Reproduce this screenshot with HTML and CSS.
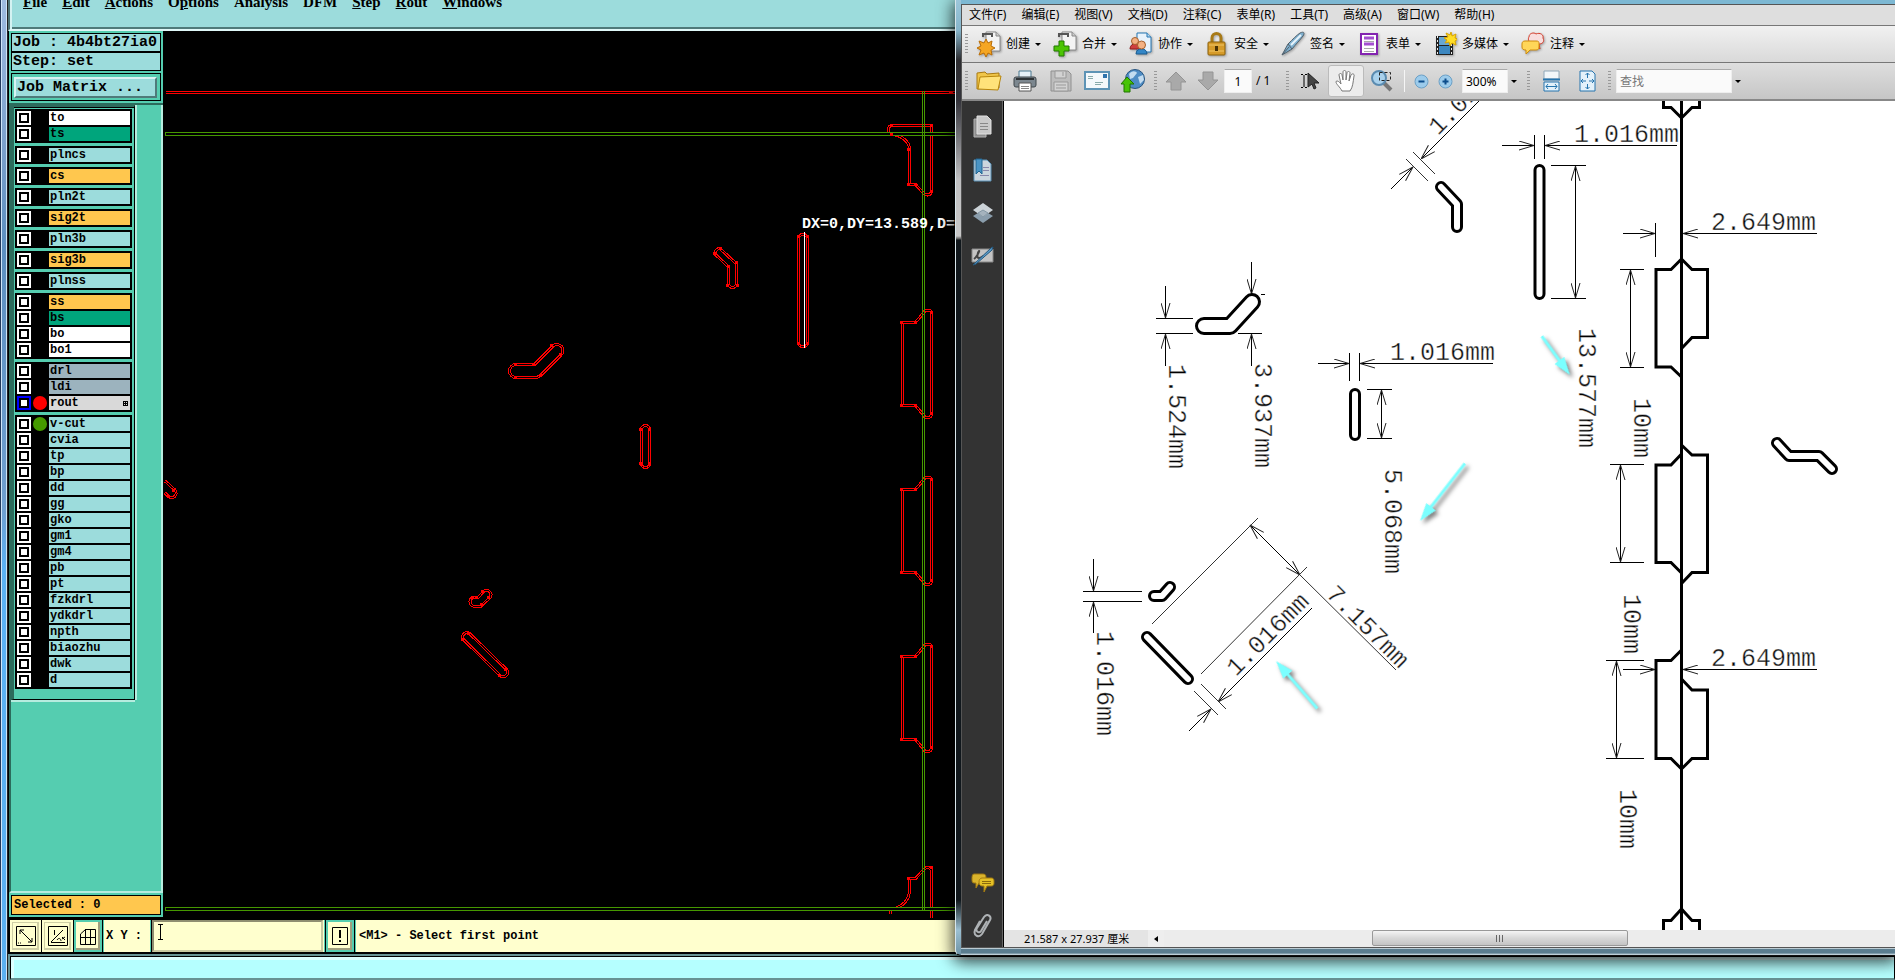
FILE: index.html
```html
<!DOCTYPE html>
<html lang="zh-CN">
<head>
<meta charset="utf-8">
<title>Rout check</title>
<link rel="stylesheet" href="styles.css">
</head>
<body>
<div class="cad">
  <div class="cad-edge"></div>
  <div class="cad-body">
    <nav class="cad-menu">
      <button><u>F</u>ile</button><button><u>E</u>dit</button><button><u>A</u>ctions</button><button>O<u>p</u>tions</button><button>Analysis</button><button>DFM</button><button><u>S</u>tep</button><button><u>R</u>out</button><button><u>W</u>indows</button>
    </nav>
    <div class="cad-main">
      <aside class="panel">
        <div class="panel-head">
          <div class="info">Job : 4b4bt27ia0</div>
          <div class="info">Step: set</div>
          <div class="matrix"><button>Job Matrix ...</button></div>
        </div>
        <div class="panel-mid">
          <div class="layers">
            <div class="group">
              <label class="row"><input type="checkbox"><i></i><span class="white">to</span></label>
              <label class="row"><input type="checkbox"><i></i><span class="green">ts</span></label>
            </div>
            <div class="group"><label class="row"><input type="checkbox"><i></i><span>plncs</span></label></div>
            <div class="group"><label class="row"><input type="checkbox"><i></i><span class="amber">cs</span></label></div>
            <div class="group"><label class="row"><input type="checkbox"><i></i><span>pln2t</span></label></div>
            <div class="group"><label class="row"><input type="checkbox"><i></i><span class="amber">sig2t</span></label></div>
            <div class="group"><label class="row"><input type="checkbox"><i></i><span>pln3b</span></label></div>
            <div class="group"><label class="row"><input type="checkbox"><i></i><span class="amber">sig3b</span></label></div>
            <div class="group"><label class="row"><input type="checkbox"><i></i><span>plnss</span></label></div>
            <div class="group">
              <label class="row"><input type="checkbox"><i></i><span class="amber">ss</span></label>
              <label class="row"><input type="checkbox"><i></i><span class="green">bs</span></label>
              <label class="row"><input type="checkbox"><i></i><span class="white">bo</span></label>
              <label class="row"><input type="checkbox"><i></i><span class="white">bo1</span></label>
            </div>
            <div class="group">
              <label class="row"><input type="checkbox"><i></i><span class="slate">drl</span></label>
              <label class="row"><input type="checkbox"><i></i><span class="slate">ldi</span></label>
              <label class="row work"><input type="checkbox"><i class="dot-red"></i><span class="silver">rout<svg width="5" height="5"><path d="M0 .5h5M0 2.5h5M0 4.5h5M.5 0v5M2.5 0v5M4.5 0v5" stroke="#000"/></svg></span></label>
            </div>
            <div class="group">
              <label class="row"><input type="checkbox"><i class="dot-green"></i><span>v-cut</span></label>
              <label class="row"><input type="checkbox"><i></i><span>cvia</span></label>
              <label class="row"><input type="checkbox"><i></i><span>tp</span></label>
              <label class="row"><input type="checkbox"><i></i><span>bp</span></label>
              <label class="row"><input type="checkbox"><i></i><span>dd</span></label>
              <label class="row"><input type="checkbox"><i></i><span>gg</span></label>
              <label class="row"><input type="checkbox"><i></i><span>gko</span></label>
              <label class="row"><input type="checkbox"><i></i><span>gm1</span></label>
              <label class="row"><input type="checkbox"><i></i><span>gm4</span></label>
              <label class="row"><input type="checkbox"><i></i><span>pb</span></label>
              <label class="row"><input type="checkbox"><i></i><span>pt</span></label>
              <label class="row"><input type="checkbox"><i></i><span>fzkdrl</span></label>
              <label class="row"><input type="checkbox"><i></i><span>ydkdrl</span></label>
              <label class="row"><input type="checkbox"><i></i><span>npth</span></label>
              <label class="row"><input type="checkbox"><i></i><span>biaozhu</span></label>
              <label class="row"><input type="checkbox"><i></i><span>dwk</span></label>
              <label class="row"><input type="checkbox"><i></i><span>d</span></label>
            </div>
          </div>
        </div>
        <div class="selected"><div>Selected : 0</div></div>
      </aside>
      <div class="board">
        <svg width="100%" height="100%" aria-label="Board view">
          <defs>
            <g id="rout">
              <path d="M960 92.5H165.500"/>
              <path d="M891 134.500a5 5 0 0 1 0-9H931.500V192a4.500 4.500 0 0 1-8 1L915.500 184.500H909.500V149C909.500 142 902 135 891 134.500Z"/>
              <path id="tab" d="M902.500 322.500H915.500L923 313.500C925 309 931 309 931.500 313V413.500C931 419 925 419 923 414.500L915.500 405.500H902.500Z"/>
              <use href="#tab" y="167"/><use href="#tab" y="334"/>
              <path d="M891 910a5 5 0 0 0 0 4M931.500 930V870a4.500 4.500 0 0 0-8 0L915.500 878.500H909.500V890C909.500 900 902 908 891 909"/>
              <rect x="798.500" y="234.500" width="9" height="112" rx="4"/>
              <path d="M720 248.500L736.500 264V285A4.500 4.500 0 0 1 728.500 285V267L715 254A5 5 0 0 1 720 248.500Z"/>
              <path d="M516 364.500H534.500L553 346A6 6 0 0 1 561 355L541 375L537 377.500H516A6.500 6.500 0 0 1 516 364.500Z"/>
              <rect x="641.500" y="425.500" width="8" height="42" rx="4"/>
              <path d="M473 597.500H478L484 591A4.500 4.500 0 0 1 490 597.500L481 606H473A4.500 4.500 0 0 1 473 597.500Z"/>
              <path d="M469 633L507 670A4.500 4.500 0 0 1 500 675.500L463 639A4.500 4.500 0 0 1 469 633Z"/>
              <path d="M165 481L175 490A4 4 0 0 1 168 496L165 493"/>
            </g>
            <path id="vcut" d="M960 134H165M960 909H165"/>
          </defs>
          <g class="cam" transform="translate(-163 -31)" fill="none">
            <use href="#rout" stroke="#f00" stroke-width="3"/>
            <use href="#rout" stroke="#000" stroke-width="1"/>
            <use href="#vcut" stroke="#459800" stroke-width="4"/>
            <use href="#vcut" stroke="#000" stroke-width="2"/>
            <path d="M922.500 91V911M924.500 91V911M165.500 132V136M165.500 907V911" stroke="#459800"/>
            <path d="M890 125h3M930 125h3M890 134h3M907 149h3M907 184h3M914 184h3M930 191h3M900 322h3M914 322h3M930 312h3M900 405h3M914 405h3M930 413h3M900 489h3M914 489h3M930 479h3M900 572h3M914 572h3M930 580h3M900 656h3M914 656h3M930 646h3M900 739h3M914 739h3M930 747h3M907 878h3M930 867h3M797 236h3M806 236h3M797 343h3M806 343h3M713 253h3M719 248h3M727 266h3M735 262h3M726 285h3M736 285h3M514 364h3M532 364h3M550 345h3M559 354h3M539 375h3M514 377h3M639 429h3M648 429h3M639 463h3M648 463h3M471 597h3M475 597h3M481 591h3M487 597h3M480 604h3M467 633h3M504 669h3M461 639h3M498 675h3M172 490h3M167 496h3M949 92h4" stroke="#f00" stroke-width="3"/>
            <path d="M804.500 232V348" stroke="#fff"/>
            <text class="measure" x="802" y="228">DX=0,DY=13.589,D=</text>
          </g>
        </svg>
      </div>
    </div>
    <div class="console">
      <button class="tool" aria-label="Zoom"><svg width="20" height="20" fill="none" stroke="#000"><path d="M.5.5h19v19H.5zM4 4l12 12M4 8V4h4M16 12v4h-4"/><path d="M2 17h3" stroke-dasharray="1 1"/></svg></button>
      <button class="tool" aria-label="Angle"><svg width="20" height="20" fill="none" stroke="#000"><path d="M.5.5h19v19H.5zM3 16.500h14M3 16L15 4M6.500 4v5M9 14c2-3 4-1 4 1M14 13l3-2M17 14l-3-3"/></svg></button>
      <button class="tool framed" aria-label="Grid"><svg width="16" height="20" fill="none" stroke="#000"><path d="M.5 8V18.500h15V3.500H5.500L.5 8M5.500 3v15M10.500 3v15M0 11.500h15"/></svg></button>
      <label class="xy" for="xy">X Y :</label>
      <div class="entry"><input id="xy" type="text"><svg class="caret" width="5" height="16" fill="none" stroke="#000"><path d="M0 .5h5M2.500 0v16M0 15.500h5"/></svg></div>
      <button class="tool framed" aria-label="Alert"><svg width="16" height="18" fill="none" stroke="#000"><path d="M.5.5h15v17H.5z"/><path d="M8 3v8M8 13v2" stroke-width="2"/></svg></button>
      <output class="message">&lt;M1&gt; - Select first point</output>
    </div>
    <footer class="cad-foot"><div></div></footer>
  </div>
</div>

<div class="pdf">
  <div class="pdf-body">
    <nav class="pdf-menu"><button>文件(F)</button><button>编辑(E)</button><button>视图(V)</button><button>文档(D)</button><button>注释(C)</button><button>表单(R)</button><button>工具(T)</button><button>高级(A)</button><button>窗口(W)</button><button>帮助(H)</button></nav>
    <div class="tasks">
      <span class="grip"></span>
      <button><svg width="24" height="26" viewBox="0 0 24 26"><path d="M9 1h10l4 4v15H9z" fill="#f3f3f3" stroke="#888"/><path d="M19 1v4h4" fill="#ccc" stroke="#888"/><path d="M6 6V3h9v3" fill="none" stroke="#555" stroke-width="2"/><path d="M9 8l2 4 4-2-1 5 4 2-4 2 1 5-4-2-2 4-2-4-5 2 2-5-4-2 4-2-2-5 5 2z" fill="#f5a623" stroke="#b96d07"/></svg>创建<b></b></button>
      <button><svg width="24" height="26" viewBox="0 0 24 26"><path d="M9 1h10l4 4v14H9z" fill="#f3f3f3" stroke="#888"/><path d="M19 1v4h4" fill="#ccc" stroke="#888"/><path d="M6 6V3h9v3" fill="none" stroke="#555" stroke-width="2"/><path d="M6 10h5v5h5v5h-5v5H6v-5H1v-5h5z" fill="#4cc404" stroke="#237a00"/></svg>合并<b></b></button>
      <button><svg width="24" height="26" viewBox="0 0 24 26"><path d="M8 2h10l4 4v15H8z" fill="#e8f2fb" stroke="#2477b3"/><path d="M18 2v4h4" fill="#b5d6ef" stroke="#2477b3"/><path d="M1 18c0-7 10-7 10 0z" fill="#cf3f3f" stroke="#8f1f1f"/><circle cx="6" cy="10" r="3.500" fill="#f4b183" stroke="#a5602c"/><path d="M7 23c0-7 11-7 11 0z" fill="#3487c7" stroke="#195a8e"/><circle cx="12.500" cy="14" r="4" fill="#f4b183" stroke="#a5602c"/></svg>协作<b></b></button>
      <button><svg width="24" height="26" viewBox="0 0 24 26"><path d="M7 12V7c0-6 9-6 9 0v5" fill="none" stroke="#a87a17" stroke-width="3"/><rect x="3" y="11" width="17" height="13" rx="1" fill="#d69b2a" stroke="#8b600b"/><path d="M4 14h15M4 20h15" stroke="#efc566"/><path d="M11.500 15v5" stroke="#4a3204" stroke-width="3"/></svg>安全<b></b></button>
      <button><svg width="24" height="26" viewBox="0 0 24 26"><path d="M1 24L7 13C12 8 16 4 19 2c4-2 5 0 3 3-3 4-7 8-11 13z" fill="#7fb0cf" stroke="#50606c"/><path d="M10 14L20 4" fill="none" stroke="#e8f4fb" stroke-width="2"/><path d="M1 24l7-8M7 13l4 5" fill="none" stroke="#50606c"/></svg>签名<b></b></button>
      <button><svg width="24" height="26" viewBox="0 0 24 26"><rect x="4" y="3" width="16" height="20" fill="#fff" stroke="#8324b0" stroke-width="2"/><path d="M7 7h10M7 13h10" stroke="#a44fd0" stroke-width="3"/><path d="M7 10.500h10M7 17.500h10M7 20.500h10" stroke="#aaa"/></svg>表单<b></b></button>
      <button><svg width="24" height="26" viewBox="0 0 24 26"><rect x="3" y="5" width="17" height="19" fill="#222"/><rect x="6" y="6" width="11" height="8" fill="#68a7d4"/><rect x="6" y="15" width="11" height="8" fill="#3c87c0"/><path d="M4.500 5v19M18.500 5v19" stroke="#eee" stroke-dasharray="2 2"/><path d="M18 1l1 4 4-2-1 4 3 1-3 2 1 4-4-2-2 3-1-4-4 1 2-3-3-2 4-1-2-4 4 2z" fill="#ffdd26" stroke="#d9a400"/></svg>多媒体<b></b></button>
      <button><svg width="24" height="26" viewBox="0 0 24 26"><path d="M8 6c0-4 5-5 7-3 4-2 8 1 7 4 2 4-1 6-4 6l1 5-4-5c-4 1-5 0-5-2-3 0-3-4-2-5z" fill="#f8dede" stroke="#d33c2a"/><path d="M4 10h11c3 0 3 1 3 3v3c0 2-1 3-3 3H9l-4 4v-4c-3 0-4-1-4-3v-3c0-2 1-3 3-3z" fill="#ffd658" stroke="#d08c0c"/></svg>注释<b></b></button>
    </div>
    <div class="tools">
      <span class="grip"></span>
      <div class="set">
        <button aria-label="打开"><svg width="26" height="22" viewBox="0 0 26 22"><path d="M1 19V3l8-1 2 2 12-1v15z" fill="#f0c64a" stroke="#a87911"/><path d="M4 7l21-1-3 14-20-1z" fill="#ffe27a" stroke="#b8860b"/></svg></button>
        <button aria-label="打印"><svg width="24" height="24" viewBox="0 0 24 24"><path d="M6 9V2h12v7" fill="#e6f0f7" stroke="#4a7890"/><rect x="1" y="8" width="22" height="10" rx="2" fill="#7c878f" stroke="#3f464b"/><path d="M3 10h18" stroke="#2e3336" stroke-width="2"/><path d="M6 14h12v8H6z" fill="#fff" stroke="#555"/><path d="M8 17.500h8M8 19.500h8" stroke="#888"/></svg></button>
        <button aria-label="保存"><svg width="22" height="22" viewBox="0 0 22 22"><path d="M1 1h17l3 3v17H1z" fill="#bdbdbd" stroke="#909090"/><path d="M5 1h11v7H5zM4 12h14v9H4z" fill="#d2d2d2" stroke="#999"/><path d="M13 2v4M6 15h10M6 18h10" stroke="#999"/></svg></button>
        <button aria-label="邮件"><svg width="26" height="20" viewBox="0 0 26 20"><rect x="1" y="1" width="24" height="17" fill="#f4f8fb" stroke="#5d93b5" stroke-width="2"/><rect x="19" y="3" width="4" height="4" fill="#2f74ad"/><path d="M4 5.500h5M4 7.500h5M11 11.500h8M11 13.500h6" stroke="#8aa"/></svg></button>
        <button aria-label="上载"><svg width="26" height="24" viewBox="0 0 26 24"><circle cx="15" cy="10" r="9.500" fill="#4e8cc4" stroke="#27547f"/><path d="M9 5c3-4 7-3 8-1l-4 5-3 1zM18 8l5-2 1 5-4 4z" fill="#c3dcf0"/><path d="M7 8l7 7h-4v8H4v-8H1z" fill="#48c405" stroke="#217400"/></svg></button>
      </div>
      <span class="grip"></span>
      <div class="set narrow">
        <button aria-label="上一页"><svg width="22" height="20" viewBox="0 0 22 20"><path d="M11 1l10 10h-5v8H6v-8H1z" fill="#a9a9a9" stroke="#949494"/></svg></button>
        <button aria-label="下一页"><svg width="22" height="20" viewBox="0 0 22 20"><path d="M11 19L1 9h5V1h10v8h5z" fill="#a9a9a9" stroke="#949494"/></svg></button>
      </div>
      <input class="page" type="text" value="1" aria-label="页码"><span class="total">/ 1</span>
      <span class="grip"></span>
      <div class="set">
        <button aria-label="选择"><svg width="20" height="18" viewBox="0 0 20 18"><path d="M1 2.500h2M5 2.500h2M4 3v12M1 15.500h2M5 15.500h2" stroke="#000" stroke-width="1"/><path d="M8 1v14l4-3 2 5 2-1-2-5h5z" fill="#444" stroke="#222"/></svg></button>
        <button class="active" aria-label="手形"><svg width="22" height="22" viewBox="0 0 22 22"><path d="M7 21C5 17 1 14 1 12s3-1 5 2L4 5c0-2 3-2 3 0l1 5V2c0-2 3-2 3 0v8l1-7c0-2 3-2 3 0l-1 8 2-6c1-2 4-1 3 1-1 6-1 11-4 15z" fill="#fff" stroke="#777"/></svg></button>
        <button aria-label="缩放"><svg width="22" height="22" viewBox="0 0 22 22"><path d="M13 13l7 7" stroke="#777" stroke-width="4"/><circle cx="8" cy="8" r="7" fill="#a9d1ec" stroke="#5a8bb0" stroke-width="2"/><path d="M8.500 2.500h11v8h-11z" fill="none" stroke="#222" stroke-dasharray="3 2"/></svg></button>
      </div>
      <span class="rule"></span>
      <div class="set small">
        <button aria-label="缩小"><svg width="15" height="15" viewBox="0 0 15 15"><circle cx="7.500" cy="7.500" r="6.500" fill="#9ccbeb" stroke="#6ba0c6"/><path d="M4.500 7.500h6" stroke="#0c4d8c" stroke-width="2"/></svg></button>
        <button aria-label="放大"><svg width="15" height="15" viewBox="0 0 15 15"><circle cx="7.500" cy="7.500" r="6.500" fill="#9ccbeb" stroke="#6ba0c6"/><path d="M4.500 7.500h6M7.500 4.500v6" stroke="#0c4d8c" stroke-width="2"/></svg></button>
      </div>
      <input class="zoom" type="text" value="300%" aria-label="缩放比例"><b></b>
      <span class="grip"></span>
      <div class="set">
        <button aria-label="适合宽度"><svg width="17" height="22" viewBox="0 0 17 22"><path d="M1 1h15v8H1z" fill="#f2f7fa" stroke="#90a8b8"/><path d="M0 9.500h17" stroke="#2675ae" stroke-width="2"/><path d="M1 12h15v9H1z" fill="#e3f1fa" stroke="#2675ae"/><path d="M3 16.500h11M5 14l-2 2.500 2 2.500M12 14l2 2.500-2 2.500" fill="none" stroke="#2675ae"/></svg></button>
        <button aria-label="适合页面"><svg width="17" height="22" viewBox="0 0 17 22"><path d="M1 1h12l3 3v17H1z" fill="#e3f1fa" stroke="#2675ae"/><path d="M8.500 3v5M8.500 14v5M2 11h5M10 11h5M6.500 5l2-2 2 2M6.500 17l2 2 2-2M4 9l-2 2 2 2M13 9l2 2-2 2" fill="none" stroke="#2675ae"/></svg></button>
      </div>
      <span class="grip"></span>
      <input class="find" type="text" placeholder="查找" aria-label="查找"><b></b>
    </div>
    <div class="view">
      <div class="side">
        <button aria-label="页面"><svg width="20" height="24" viewBox="0 0 20 24"><path d="M1 4h12v18H1z" fill="#8d8d8d" stroke="#b5b5b5"/><path d="M4 1h10l4 4v14H4z" fill="#c9c9c9" stroke="#e2e2e2"/><path d="M7 8.500h8M7 11.500h8M7 14.500h8" stroke="#888"/></svg></button>
        <button aria-label="书签"><svg width="20" height="24" viewBox="0 0 20 24"><path d="M1 2h13l4 4v17H1z" fill="#ccd6de" stroke="#5c93b8"/><path d="M3 1h6v15l-3-3-3 3z" fill="#4a94c4" stroke="#206591"/><path d="M10 9.500h6M10 12.500h6M7 17.500h9" stroke="#88a"/></svg></button>
        <button aria-label="图层"><svg width="22" height="22" viewBox="0 0 22 22"><path d="M11 8l10 6-10 7-10-7z" fill="#8a9dac"/><path d="M11 1l10 7-10 7L1 8z" fill="#ccd3d8"/><path d="M11 8l5 3-5 4-5-4z" fill="#a5b3be" stroke="#8497a5"/></svg></button>
        <button aria-label="签名"><svg width="24" height="22" viewBox="0 0 24 22"><path d="M1 4h21v13H1z" fill="#c4c4c4" stroke="#888"/><path d="M3 14c3-2 6-9 5-8s-3 7 0 7 3-2 5-2" fill="none" stroke="#444" stroke-width="2"/><path d="M2 20L20 3l2-1-1 3L5 19z" fill="#5c9cc9" stroke="#26587d"/></svg></button>
        <span class="fill"></span>
        <button aria-label="注释"><svg width="24" height="20" viewBox="0 0 24 20"><path d="M3 1h9c3 0 3 2 3 5s0 4-3 4H8l-3 5V10H3C1 10 1 8 1 6s0-5 2-5z" fill="#d9b32c" stroke="#a37b10"/><path d="M11 5h9c3 0 3 2 3 4s0 4-3 4h-4l-3 6v-6h-2c-2 0-3-2-3-4s1-4 3-4z" fill="#e5c126" stroke="#a37b10"/><path d="M11 8.500h9M11 10.500h9" stroke="#8b6a0c"/></svg></button>
        <button aria-label="附件"><svg width="20" height="24" viewBox="0 0 20 24"><path d="M14 7l-6 10c-2 3-6 0-4-3l7-11c3-4 8-1 6 3L9 20c-3 4-9 2-7-4l5-9" fill="none" stroke="#aeb2b5" stroke-width="2"/></svg></button>
      </div>
      <div class="doc">
        <svg width="100%" height="100%" aria-label="Dimension drawing">
          <defs>
            <marker id="tip" viewBox="-15 -5 15 10" refX="0" refY="0" markerWidth="15" markerHeight="10" markerUnits="userSpaceOnUse" orient="auto-start-reverse"><path d="M-15-4.500L0 0l-15 4.500" fill="none" stroke="#222"/></marker>
            <g id="slots">
              <path d="M1441 187L1457 204V227"/><path d="M1154 596H1162L1170 587"/><path d="M1147 637L1188 679"/><path d="M1777 443L1789 456H1819L1832 469"/><path d="M1539.500 170V294M1355 394V435"/>
            </g>
          </defs>
          <g transform="translate(-1004 -101)">
            <g class="dims">
              <text x="1574" y="142">1.016mm</text><text x="1711" y="230">2.649mm</text><text x="1390" y="360">1.016mm</text><text x="1711" y="666">2.649mm</text>
              <text transform="translate(1169 364) rotate(90)">1.524mm</text>
              <text transform="translate(1255 363) rotate(90)">3.937mm</text>
              <text transform="translate(1579 328) rotate(90)">13.577mm</text>
              <text transform="translate(1634 398) rotate(90)">10mm</text>
              <text transform="translate(1385 469) rotate(90)">5.068mm</text>
              <text transform="translate(1097 631) rotate(90)">1.016mm</text>
              <text transform="translate(1624 594) rotate(90)">10mm</text>
              <text transform="translate(1620 789) rotate(90)">10mm</text>
              <text transform="translate(1236 677) rotate(-45)">1.016mm</text>
              <text transform="translate(1325 595) rotate(45)">7.157mm</text>
              <text transform="translate(1438 136) rotate(-45)">1.016mm</text>
            </g>
            <g fill="none" stroke="#000">
              <path d="M1156 318.500H1193M1156 333.500H1193M1261 294.500H1265M1238 333.500H1262M1349.500 353V381M1359.500 353V381M1367 389.500H1392M1367 438.500H1392M1534.500 135V159M1544.500 135V159M1551 165.500H1586M1551 298.500H1586M1655.500 223V257M1620 269.500H1644M1620 367.500H1644M1610 464.500H1644M1610 562.500H1644M1606 660.500H1644M1606 758.500H1644M1083 591.500H1142M1083 601.500H1142"/>
              <path d="M1152 624L1258 518M1201 674L1307 567M1201 684L1226 709M1194 691L1218 715M1300 575L1396 670M1413 152L1435 174M1406 159L1428 181" stroke="#333"/>
              <g marker-end="url(#tip)">
                <path d="M1165.500 286V318"/><path d="M1165.500 366V334"/><path d="M1251.500 262V294"/><path d="M1251.500 366V334"/><path d="M1318 363.500H1349"/><path d="M1493 363.500H1360"/><path d="M1502 145.500H1534"/><path d="M1677 145.500H1545"/><path d="M1623 233.500H1655"/><path d="M1817 233.500H1683"/><path d="M1623 669.500H1655"/><path d="M1817 669.500H1683"/><path d="M1093.500 559V591"/><path d="M1093.500 633V602"/>
                <path d="M1312 608L1218 702"/><path d="M1189 731L1211 709"/><path d="M1490 90L1421 159"/><path d="M1391 189L1413 167"/>
                <g marker-start="url(#tip)"><path d="M1381.500 390V438"/><path d="M1575.500 166V298"/><path d="M1630.500 270V367"/><path d="M1620.500 465V562"/><path d="M1616.500 661V758"/><path d="M1250 525L1300 575"/></g>
              </g>
              <g stroke-width="3">
                <path d="M1681.500 101V931"/>
                <path d="M1663.500 100V107.500H1671L1681.500 118L1692 107.500H1699.500V100M1681.500 259L1671 269.500H1656V367H1671L1681.500 377M1681.500 259L1692 269.500H1707.500V337.500H1692L1682 348M1681.500 454L1671 465H1656V562.500H1671L1681.500 573M1681.500 445L1692 455H1707.500V572.500H1692L1682 583M1681.500 650L1671 660.500H1656V758.500H1671L1681.500 769L1692 758.500H1707.500V690H1692L1681.500 679M1663.500 932V920.500H1671L1681.500 909L1692 920.500H1699.500V932"/>
              </g>
              <g stroke-linecap="round" stroke-linejoin="round">
                <use href="#slots" stroke-width="12"/><use href="#slots" stroke="#fff" stroke-width="6"/>
                <path d="M1204 326H1230L1252 302" stroke-width="18"/><path d="M1204 326H1230L1252 302" stroke="#fff" stroke-width="12"/>
              </g>
            </g>
            <g class="callouts">
              <path transform="translate(1570 375) rotate(54)" d="M0 0L-18-6V-1.500H-48V1.500H-18V6Z"/>
              <path transform="translate(1420 521) rotate(128)" d="M0 0L-18-6V-1.500H-73V1.500H-18V6Z"/>
              <path transform="translate(1276 661) rotate(229)" d="M0 0L-18-6V-1.500H-63V1.500H-18V6Z"/>
            </g>
          </g>
        </svg>
        <div class="status">
          <span class="size">21.587 x 27.937 厘米</span>
          <button class="left" aria-label="向左滚动"><svg width="4" height="6"><path d="M4 0v6L0 3z"/></svg></button>
          <div class="track"><div class="thumb"><svg width="8" height="7"><path d="M.5 0v7M3.500 0v7M6.500 0v7" stroke="#666"/></svg></div></div>
        </div>
      </div>
    </div>
  </div>
</div>
</body>
</html>
```
FILE: styles.css
```css
* { box-sizing: border-box; }
body { margin: 0; height: 100vh; overflow: hidden; position: relative; background: #000; font-family: "Noto Sans", "Noto Sans CJK SC", sans-serif; }
button { font: inherit; color: inherit; background: none; border: 0; padding: 0; margin: 0; }
input { margin: 0; font: inherit; }
svg { display: block; }

/* CAD window */
.cad { display: flex; height: 100%; font-family: "Liberation Mono", monospace; }
.cad-edge { width: 8px; flex: none; background: linear-gradient(#9fbbe0, #7ba0cc 15%, #5c8fc0 25%, #6f9fd0 52%, #5bb2f5 58%, #5bb0f0); border-left: 1px solid #23395c; border-right: 1px solid #222; box-shadow: inset 1px 0 #cfe4f7, inset -1px 0 #cfe4f7; }
.cad-body { flex: 1; min-width: 0; display: flex; flex-direction: column; }
.cad-menu { height: 31px; flex: none; background: #9cdcdc; border-left: 2px solid #4f7375; border-bottom: 2px solid #dff7f7; box-shadow: inset 2px 0 #d4f2f2, inset 0 -2px #4f7a7a; display: flex; align-items: flex-start; gap: 15px; padding-left: 13px; font: bold 15px/20px "Liberation Serif", serif; }
.cad-menu button { margin-top: -8px; }
.cad-main { flex: 1; min-height: 0; display: flex; }
.panel { width: 155px; flex: none; background: #55cdb0; border-left: 1px solid #000; display: flex; flex-direction: column; }
.panel-head { padding: 2px 2px; border-bottom: 2px solid #2c6b5c; }
.info { height: 19px; background: #9cdcdc; border: 1px solid #000; padding-left: 1px; font-size: 15px; line-height: 18px; font-weight: bold; white-space: pre; }
.matrix { margin-top: 2px; height: 28px; border: 1px solid #000; padding: 3px 3px 2px 2px; }
.matrix button { width: 100%; height: 21px; background: #9cdcdc; border: 2px solid; border-color: #d9f3f3 #4f7a7a #4f7a7a #d9f3f3; font-size: 15px; line-height: 17px; font-weight: bold; text-align: left; padding-left: 1px; }
.panel-mid { flex: 1; min-height: 0; border-left: 2px solid #2c6b5c; border-right: 2px solid #b7ecdf; border-bottom: 2px solid #b7ecdf; }
.layers { width: 124px; padding: 2px 2px 10px 1px; border: solid #000; border-width: 1px; border-top: 2px solid #2c6b5c; box-shadow: inset 0 1px #000, 2px 0 #b7ecdf, 0 2px #b7ecdf; border-left: 3px solid #2c6b5c; display: flex; flex-direction: column; gap: 3px; }
.group { background: #000; padding: 2px; display: flex; flex-direction: column; gap: 2px; }
.row { display: flex; gap: 2px; height: 14px; }
.row input { appearance: none; width: 10px; height: 10px; margin: 2px; background: #fff; border: 2px solid #000; border-radius: 0; box-shadow: 0 0 0 2px #fff; flex: none; }
.row.work input { box-shadow: 0 0 0 2px #00f; }
.row i { width: 14px; height: 14px; border-radius: 50%; flex: none; }
.row .dot-red { background: #f00; }
.row .dot-green { background: #459a00; }
.row span { flex: 1; background: #9cdcdc; font-size: 12px; line-height: 14px; font-weight: bold; padding: 0 2px 0 1px; display: flex; align-items: center; justify-content: space-between; }
.row .white { background: #fff; }
.row .green { background: #00a57c; }
.row .amber { background: #ffc74e; }
.row .slate { background: #9cb3be; }
.row .silver { background: #d9d9d9; }
.selected { flex: none; height: 25px; padding: 2px; border-bottom: 1px solid #000; }
.selected div { height: 20px; background: #ffc74e; border: 1px solid #000; padding-left: 2px; font-size: 12px; line-height: 18px; font-weight: bold; white-space: pre; }
.board { flex: 1; min-width: 0; background: #000; overflow: hidden; }
.cam { shape-rendering: crispEdges; }
.measure { fill: #fff; font: bold 15px "Liberation Mono", monospace; }

.console { flex: none; height: 36px; padding: 2px 0 2px 2px; background: #000; display: flex; gap: 1px; }
.console > * { background: #ffffce; }
.tool { width: 31px; display: grid; place-items: center; border: 2px solid #ffffce; box-shadow: inset 1px 1px #cfcfa5, inset -2px -2px #cfcfa5; }
.tool.framed { width: 28px; border-color: #55cdb0; box-shadow: inset -2px -2px #a09f7e; }
.xy { width: 48px; padding-left: 2px; border: solid #55cdb0; border-width: 0 1px; font-size: 12px; line-height: 32px; font-weight: bold; white-space: pre; }
.entry { width: 173px; position: relative; border-right: 1px solid #55cdb0; }
.entry input { width: 171px; height: 32px; background: #ffffce; border: 2px solid; border-color: #8f8e70 #c9c9a0 #c9c9a0 #8f8e70; padding: 0 10px; }
.caret { position: absolute; left: 6px; top: 4px; }
.message { flex: 1; padding-left: 3px; border-left: 1px solid #55cdb0; font-size: 12px; line-height: 32px; font-weight: bold; white-space: pre; }
.cad-foot { flex: none; height: 26px; padding: 2px 0 0 2px; background: #679394; }
.cad-foot div { height: 24px; border: 1px solid #000; border-bottom: 2px solid #679394; background: #b5ffff; box-shadow: inset 3px 3px #dcffff; }

/* PDF window */
.pdf { position: absolute; left: 955px; right: 0; top: 0; bottom: 24px; padding: 4px 0 7px 5px; border-left: 1px solid #d8e6ec; border-bottom: 1px solid #111; border-bottom-left-radius: 6px; box-shadow: 0 4px 16px 2px rgba(0, 0, 0, .75); background: linear-gradient(90deg, #7db8d3, #7db8d3) 5px 0 / 100% 4px no-repeat, linear-gradient(#f0f7fa, #5b7d8f 20%, #5b7d8f 70%, #dce8ee) 5px 100% / 100% 7px no-repeat, linear-gradient(#9cc6da, #87b6cc 30px, #2c2c30 60px, #33333a 100px, #c0c0c2 180px, #c8c8c8 236px, #555 239px, #10171c 240px, #10171c 900px, #9cc0d2 930px, #6e93a6); }
.pdf-body { height: 100%; display: flex; flex-direction: column; border: 1px solid #555; border-right: 0; background: #dedede; }
.pdf b { width: 0; border: 3px solid transparent; border-top: 3px solid #000; border-bottom: 0; flex: none; }
.grip { width: 3px; height: 22px; flex: none; margin: 0 3px; background-image: radial-gradient(circle, #999 1px, transparent 1px); background-size: 2px 3px; }
.pdf-menu { flex: none; height: 21px; display: flex; align-items: center; gap: 15px; padding-left: 7px; border-bottom: 1px solid #777; font-size: 12px; line-height: 18px; }
.tasks { flex: none; height: 37px; display: flex; align-items: center; background: linear-gradient(#f1f1f1, #d9d9d9); border-bottom: 1px solid #777; }
.tasks .grip { margin-right: 9px; }
.tasks button { display: flex; align-items: center; gap: 5px; margin-right: 12px; font-size: 12px; line-height: 18px; }
.tasks svg { filter: drop-shadow(1px 1px 1px rgba(0, 0, 0, .3)); }
.tools { flex: none; height: 38px; display: flex; align-items: center; background: linear-gradient(#dedede, #c6c6c6); border-bottom: 2px solid #888; font-size: 12px; line-height: 18px; }
.set { display: flex; }
.set button { width: 36px; height: 32px; display: grid; place-items: center; }
.set.narrow button { width: 32px; }
.set.small button { width: 24px; }
.set .active { background: #ececec; border: 1px solid #bbb; border-radius: 3px; }
.tools input { height: 24px; border: 1px solid #eee; border-top: 1px solid #aaa; border-radius: 0; background: #fafafa; color: #000; padding: 0 3px; }
.tools .page { width: 28px; padding: 0; text-align: center; }
.total { width: 31px; padding-left: 4px; }
.rule { width: 1px; height: 22px; background: #f5f5f5; margin: 0 4px; }
.tools .zoom { width: 46px; margin: 0 3px 0 5px; }
.tools .zoom + b { margin-right: 7px; }
.tools .find { width: 116px; margin: 0 3px 0 2px; }
.find::placeholder { color: #777; opacity: 1; }
.view { flex: 1; min-height: 0; display: flex; }
.side { width: 42px; flex: none; background: #333; border-right: 1px solid #000; box-shadow: inset -1px 0 #666; display: flex; flex-direction: column; align-items: center; padding-top: 4px; }
.side button { height: 43px; width: 38px; display: grid; place-items: center; flex: none; }
.side .fill { flex: 1; }
.doc { flex: 1; min-width: 0; display: flex; flex-direction: column; background: #fff; }
.doc > svg { flex: 1; min-height: 0; }
.dims { font: 25px "Liberation Mono", monospace; fill: #000; stroke: rgba(255, 255, 255, .5); stroke-width: 1px; }
.callouts { fill: #7bffff; filter: drop-shadow(3px 3px 2px rgba(0, 0, 0, .5)); }
.status { flex: none; height: 17px; display: flex; background: #e4e4e4; font-size: 11px; line-height: 18px; }
.size { width: 144px; padding-left: 20px; white-space: nowrap; }
.left { width: 16px; background: #eee; display: grid; place-items: center; }
.track { flex: 1; background: #ececec; padding-left: 208px; }
.thumb { width: 256px; height: 16px; border: 1px solid #999; border-radius: 2px; background: linear-gradient(#f4f4f4, #d8d8d8 50%, #c4c4c4); display: grid; place-items: center; }
```
